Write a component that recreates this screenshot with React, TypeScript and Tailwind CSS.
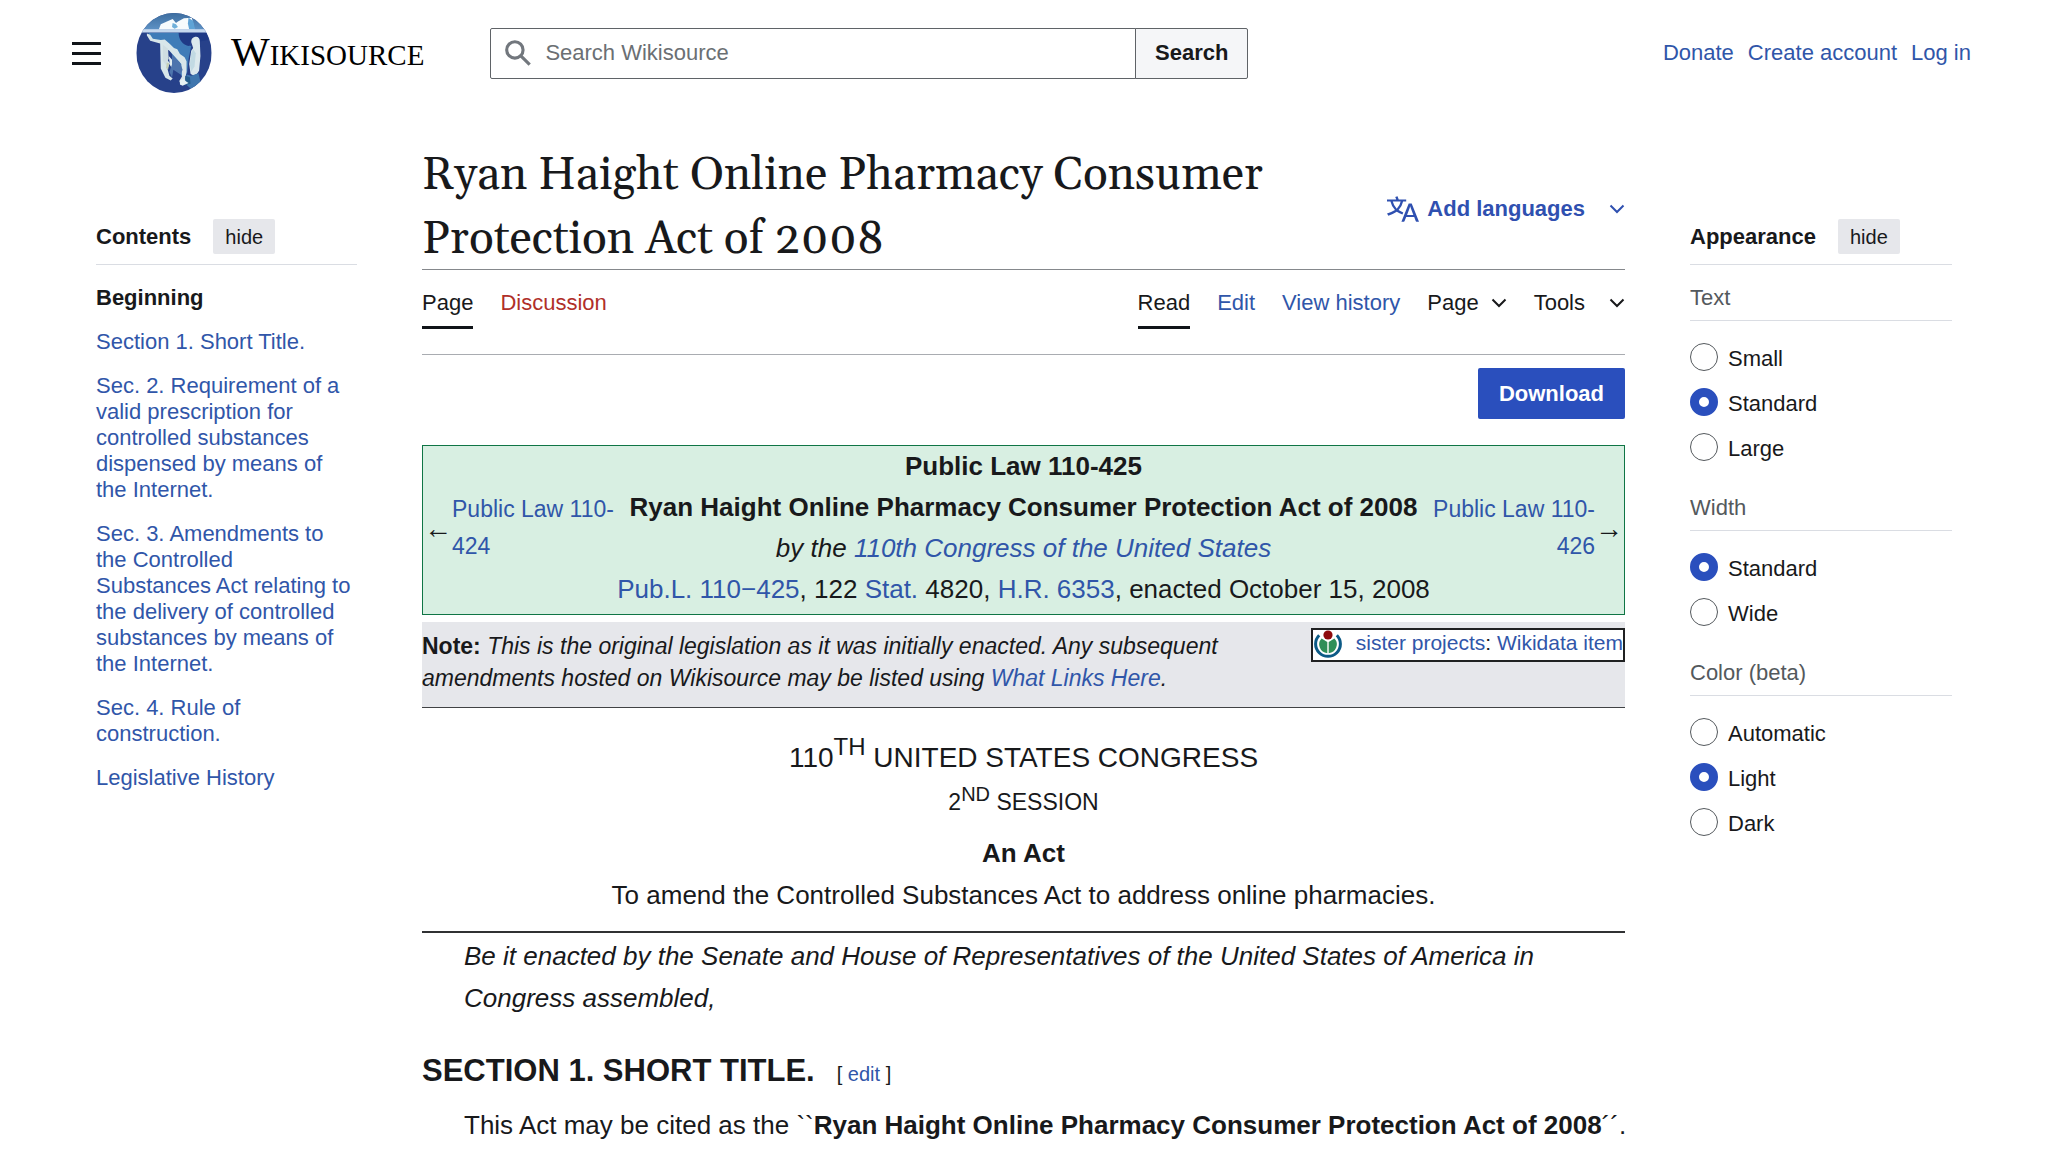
import { useState } from "react";
import type { ReactNode } from "react";
import clsx from "clsx";

const CONTENTS = [
  "Section 1. Short Title.",
  "Sec. 2. Requirement of a valid prescription for controlled substances dispensed by means of the Internet.",
  "Sec. 3. Amendments to the Controlled Substances Act relating to the delivery of controlled substances by means of the Internet.",
  "Sec. 4. Rule of construction.",
  "Legislative History",
];

const APPEARANCE = [
  { name: "text", label: "Text", options: ["Small", "Standard", "Large"], initial: "Standard" },
  { name: "width", label: "Width", options: ["Standard", "Wide"], initial: "Standard" },
  { name: "color", label: "Color (beta)", options: ["Automatic", "Light", "Dark"], initial: "Light" },
];

function A({ children, className }: { children: ReactNode; className?: string }) {
  return (
    <a href="#" className={clsx("hover:underline", className ?? "text-[#3056a9]")}>
      {children}
    </a>
  );
}

function Chevron() {
  return (
    <svg viewBox="0 0 16 10" className="h-[10px] w-4 shrink-0" fill="none" stroke="currentColor" strokeWidth="2">
      <path d="M1.5 1.5 8 8l6.5-6.5" />
    </svg>
  );
}

function Logo() {
  return (
    <svg viewBox="18 20 228 242" className="h-20 w-[76px]" aria-hidden="true">
      <defs>
        <clipPath id="disc">
          <ellipse cx="132" cy="141" rx="114" ry="121" />
        </clipPath>
        <linearGradient id="sky" x1="0" y1="0" x2="0" y2="1">
          <stop offset="0" stopColor="#3d6d9f" />
          <stop offset="1" stopColor="#5f93c6" />
        </linearGradient>
      </defs>
      <g clipPath="url(#disc)">
        <rect x="18" y="20" width="228" height="242" fill="#27418a" />
        <rect x="18" y="20" width="228" height="52" fill="url(#sky)" />
        {/* submerged ice */}
        <path d="M54 80h94c2 22 16 38 36 40l-8 40-4 40-10 20-14-20-24-60-26-34-34-6z" fill="#3f7cb8" />
        <path d="M146 80h88v22l-24 4-12-14-14 6-6 22c-20-2-32-20-32-40z" fill="#1f3a86" />
        <path d="M50 82l10 4 8 12 24 4 12-2 14 12 14 14 10 4 8 14 14 10 6 12v32l-4 20 2 14-16 4-4-10 8-14-2-38-18-20-20-22-8 4 2 24 10 12-8 16 6 22 10 8-6 6-16-8-14-28-2-76-30-8-10-16z" fill="#d8e6ea" />
        <path d="M98 116l16 12 2 30-8 20-10-14z" fill="#cfdde2" />
        <path d="M116 150l12 14 8 4-2 12-6 10-8-12z" fill="#e3edf0" />
        <path d="M126 146l24 24 8 22-6 14-22-14-4 24-8-18 8-22z" fill="#4d74ad" />
        <path d="M110 170l8 2-4 20-6-6z" fill="#c5cfb9" />
        <path d="M196 92c8-2 14 4 14 12l2 46-4 44c-6 14-18 18-26 10l-4-30 6-40 6-8-6-18c0-10 4-14 12-16z" fill="#dce9ed" />
        <path d="M190 130l8 12-4 40-10 16-4-22 4-34z" fill="#c2dae3" />
        <path d="M170 206l14 4 22-8 6 26-4 18-24 4-18-16z" fill="#3f76ae" />
        <path d="M166 210l14 4 2 20-16 4z" fill="#245d8d" />
        <path d="M150 224l10-4 10 8 6 4-10 4-8 4-8-4z" fill="#e6f2f5" />
        {/* tip above the waterline */}
        <path d="M86 70l6-16 22-10 14-6 10 12 6-4 18-10 24-2 8 36z" fill="#f6fbfd" />
        <path d="M128 50l10 4 6 8-10 6-8-6z" fill="#6fb0da" />
        <path d="M176 34l14 10 6 26h-18l-4-18z" fill="#5fa3d6" />
        <rect x="18" y="69" width="228" height="10" fill="#c6d8ee" />
      </g>
    </svg>
  );
}

function LanguageIcon() {
  return (
    <svg viewBox="0 0 20 20" className="size-8 shrink-0" fill="currentColor" aria-hidden="true">
      <path d="M20 18h-1.44a.6.6 0 0 1-.4-.12.8.8 0 0 1-.23-.31L17 15h-5l-1 2.54a.8.8 0 0 1-.22.3.6.6 0 0 1-.4.14H9l4.55-11.47h1.89zm-3.53-4.31L14.89 9.5a12 12 0 0 1-.39-1.24q-.09.37-.19.69l-.19.56-1.58 4.19zm-6.3-1.58a13.4 13.4 0 0 1-2.91-1.41 11.46 11.46 0 0 0 2.81-5.37H12V4H7.31a4 4 0 0 0-.2-.56C6.87 2.79 6.6 2 6.6 2l-1.47.5s.4.89.6 1.5H0v1.33h2.15A11.23 11.23 0 0 0 5 10.7a17.2 17.2 0 0 1-5 2.1q.56.82.87 1.38a23.3 23.3 0 0 0 5.22-2.51 15.6 15.6 0 0 0 3.56 1.77zM3.63 5.33h4.91a8.1 8.1 0 0 1-2.45 4.45 9.1 9.1 0 0 1-2.46-4.45" />
    </svg>
  );
}

function WikimediaIcon() {
  return (
    <svg viewBox="0 0 28 28" className="size-7 shrink-0" aria-hidden="true">
      <path d="M5.2 5.2a12.4 12.4 0 1 0 17.6 0" fill="none" stroke="#0c5a86" strokeWidth="3" />
      <path d="M7.6 8.4a8.8 8.8 0 0 0 5.7 14.8V12z" fill="#2f8f58" />
      <path d="M20.4 8.4a8.8 8.8 0 0 1-5.7 14.8V12z" fill="#2f8f58" />
      <circle cx="14" cy="5" r="4.6" fill="#8e0a0c" />
    </svg>
  );
}

function PanelHeading({ title }: { title: string }) {
  return (
    <div className="flex items-center border-b border-[#dadde3] pb-[10px]">
      <h2 className="font-bold">{title}</h2>
      <button className="ml-[22px] h-[35px] rounded-xs bg-[#e6e7eb] px-3 text-[20px]">hide</button>
    </div>
  );
}

function OptionGroup({ group }: { group: (typeof APPEARANCE)[number] }) {
  const [value, setValue] = useState(group.initial);
  return (
    <fieldset className="mb-8">
      <legend className="mb-5 w-full border-b border-[#dadde3] pb-[9px] leading-[26px] text-[#54595d]">
        {group.label}
      </legend>
      <div className="flex flex-col gap-[13px]">
        {group.options.map((option) => (
          <label key={option} className="flex items-center gap-[10px] leading-7">
            <input
              type="radio"
              name={group.name}
              checked={value === option}
              onChange={() => setValue(option)}
              className="size-7 shrink-0 appearance-none rounded-full border border-[#54595d] bg-white checked:border-[9px] checked:border-[#2a4fbd]"
            />
            <span className="pt-1">{option}</span>
          </label>
        ))}
      </div>
    </fieldset>
  );
}

function Header() {
  return (
    <header className="flex h-[106px] items-center pr-[77px] pl-[72px]">
      <button aria-label="Main menu" className="flex w-[29px] flex-col gap-[7px]">
        <span className="h-[3px] bg-[#101418]" />
        <span className="h-[3px] bg-[#101418]" />
        <span className="h-[3px] bg-[#101418]" />
      </button>
      <a href="#" className="ml-[35px] flex items-center gap-[19px] text-black">
        <Logo />
        <span className="font-['Liberation_Serif',serif] text-[29px] leading-10">
          <span className="text-[41px]">W</span>IKISOURCE
        </span>
      </a>
      <form className="ml-[66px] flex h-[51px] w-[758px]" onSubmit={(e) => e.preventDefault()}>
        <label className="flex flex-1 items-center gap-[14px] rounded-l-xs border border-[#5f6367] pl-[14px]">
          <svg viewBox="0 0 20 20" className="size-[26px] shrink-0" fill="none" stroke="#72777d" strokeWidth="2.4">
            <circle cx="7.6" cy="7.6" r="6.3" />
            <path d="m12 12 7 7" />
          </svg>
          <input
            type="search"
            aria-label="Search Wikisource"
            placeholder="Search Wikisource"
            className="min-w-0 flex-1 outline-none placeholder:text-[#6b6f73]"
          />
        </label>
        <button className="-ml-px rounded-r-xs border border-[#5f6367] bg-[#f5f6f8] px-[19px] font-bold">Search</button>
      </form>
      <nav className="ml-auto flex gap-[14px]">
        <A>Donate</A>
        <A>Create account</A>
        <A>Log in</A>
      </nav>
    </header>
  );
}

function PageTabs() {
  const tab = "border-b-3 pt-[18px] pb-2 leading-[30px]";
  return (
    <nav className="flex items-start justify-between border-b border-[#a9acb1] pb-[25px]">
      <div className="flex gap-[27px]">
        <A className={clsx(tab, "border-[#101418]")}>Page</A>
        <A className={clsx(tab, "border-transparent text-[#b02f29]")}>Discussion</A>
      </div>
      <div className="flex gap-[27px]">
        <A className={clsx(tab, "border-[#101418]")}>Read</A>
        <A className={clsx(tab, "border-transparent text-[#3056a9]")}>Edit</A>
        <A className={clsx(tab, "border-transparent text-[#3056a9]")}>View history</A>
        <button className={clsx(tab, "flex items-center gap-3 border-transparent")}>
          Page <Chevron />
        </button>
        <button className={clsx(tab, "flex items-center gap-6 border-transparent")}>
          Tools <Chevron />
        </button>
      </div>
    </nav>
  );
}

function LawHeader() {
  return (
    <div className="mt-[26px] grid grid-cols-[1fr_auto_1fr] items-center border border-[#0f7545] bg-[#d8efe2] pb-1 text-center">
      <div className="flex items-center pl-px text-left text-[23px] leading-[37px]">
        <span className="text-[28px]">←</span>
        <A>Public Law 110-424</A>
      </div>
      <div className="text-[26px] leading-[41px]">
        <p className="font-bold">Public Law 110-425</p>
        <p className="font-bold">Ryan Haight Online Pharmacy Consumer Protection Act of 2008</p>
        <p className="italic">
          by the <A>110th Congress of the United States</A>
        </p>
        <p>
          <A>Pub.L. 110−425</A>, 122 <A>Stat.</A> 4820, <A>H.R. 6353</A>, enacted October 15, 2008
        </p>
      </div>
      <div className="flex items-center justify-end pr-px text-right text-[23px] leading-[37px]">
        <A>Public Law 110-426</A>
        <span className="text-[28px]">→</span>
      </div>
    </div>
  );
}

function Note() {
  return (
    <div className="mt-[7px] flex items-start justify-between border-b border-[#404244] bg-[#e6e7eb] pb-[13px]">
      <p className="max-w-[820px] pt-2 text-[23px] leading-8 italic">
        <b className="not-italic">Note:</b> This is the original legislation as it was initially enacted. Any subsequent
        amendments hosted on Wikisource may be listed using <A>What Links Here</A>.
      </p>
      <div className="mt-[6px] flex h-[34px] shrink-0 items-start gap-[14px] border-2 border-[#202122] bg-white pl-px text-[21px]">
        <WikimediaIcon />
        <span>
          <A>sister projects</A>: <A>Wikidata item</A>
        </span>
      </div>
    </div>
  );
}

function Act() {
  return (
    <article className="text-[26px] leading-[42px]">
      <div className="mt-[29px] border-b-2 border-[#303133] pb-[15px] text-center">
        <p className="text-[28px]">
          110<sup className="static align-[12px] text-[24px]">TH</sup> UNITED STATES CONGRESS
        </p>
        <p className="mt-[2px] text-[23px]">
          2<sup className="static align-[9px] text-[20px]">ND</sup> SESSION
        </p>
        <p className="mt-[9px] font-bold">An Act</p>
        <p>To amend the Controlled Substances Act to address online pharmacies.</p>
      </div>
      <p className="mt-[2px] pl-[42px] italic">
        Be it enacted by the Senate and House of Representatives of the United States of America in Congress assembled,
      </p>
      <div className="mt-[31px] flex items-baseline gap-[22px]">
        <h2 className="text-[31px] font-bold">SECTION 1. SHORT TITLE.</h2>
        <span className="text-[20px]">
          [ <A>edit</A> ]
        </span>
      </div>
      <p className="mt-[9px] pl-[42px] whitespace-nowrap">
        This Act may be cited as the ``<b>Ryan Haight Online Pharmacy Consumer Protection Act of 2008</b>´´.
      </p>
    </article>
  );
}

export default function App() {
  return (
    <div className="min-h-screen bg-white font-['Liberation_Sans',Arial,sans-serif] text-[22px] leading-[26px] text-[#18191b]">
      <Header />
      <div className="flex items-start px-24">
        <nav className="w-[261px] shrink-0 pt-[113px]">
          <PanelHeading title="Contents" />
          <ul className="mt-5 flex flex-col gap-[18px] pr-[6px]">
            <li>
              <A className="font-bold">Beginning</A>
            </li>
            {CONTENTS.map((item) => (
              <li key={item}>
                <A>{item}</A>
              </li>
            ))}
          </ul>
        </nav>

        <main className="mx-[65px] min-w-0 flex-1 pt-[38px]">
          <div className="flex items-center justify-between border-b border-[#85888c]">
            <h1 className="-mb-[3px] max-w-[900px] font-[Georgia,Gelasio,'Liberation_Serif',serif] text-[46px] leading-[64px]">
              Ryan Haight Online Pharmacy Consumer Protection Act of 2008
            </h1>
            <button className="flex items-center gap-2 pt-1 font-bold text-[#2f50b0]">
              <LanguageIcon />
              Add languages
              <span className="ml-4">
                <Chevron />
              </span>
            </button>
          </div>
          <PageTabs />
          <div className="mt-[13px] flex justify-end">
            <button className="h-[51px] rounded-xs bg-[#2a4fbd] px-[21px] font-bold text-white">Download</button>
          </div>
          <LawHeader />
          <Note />
          <Act />
        </main>

        <aside className="w-[262px] shrink-0 pt-[113px]">
          <PanelHeading title="Appearance" />
          <div className="pt-5">
            {APPEARANCE.map((group) => (
              <OptionGroup key={group.name} group={group} />
            ))}
          </div>
        </aside>
      </div>
    </div>
  );
}
